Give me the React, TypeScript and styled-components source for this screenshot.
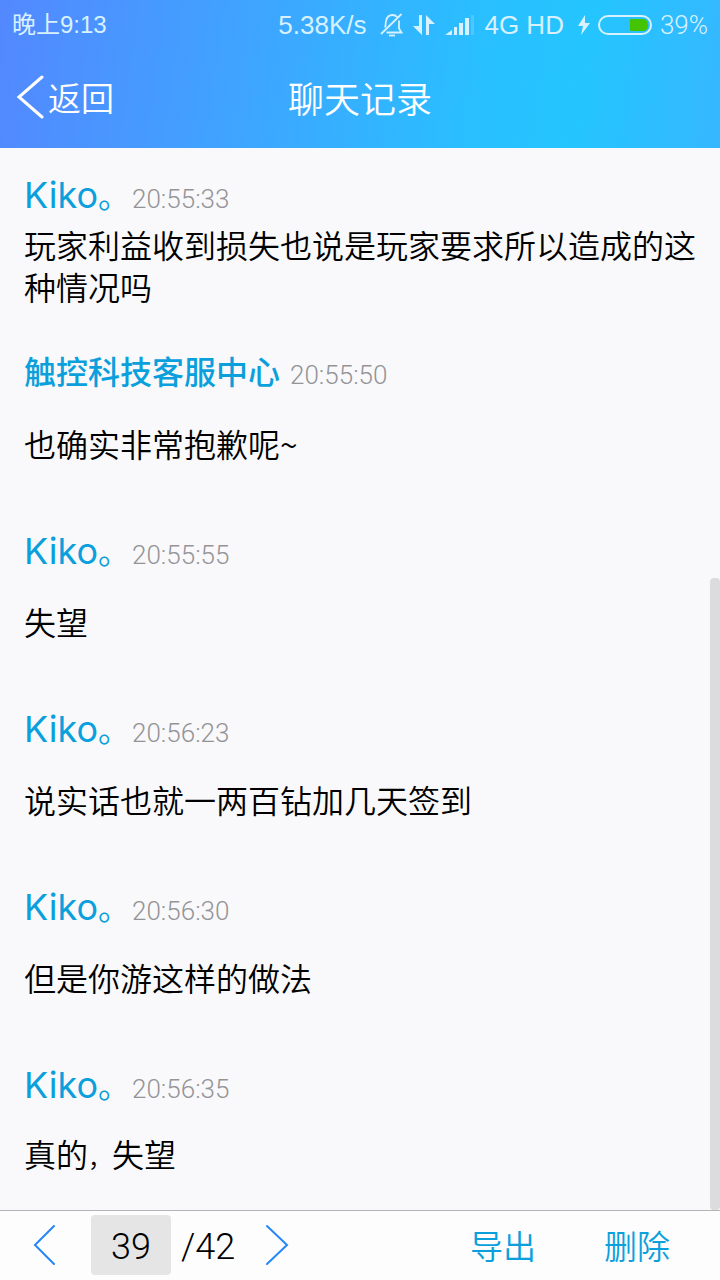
import React from "react";
import styled, { createGlobalStyle } from "styled-components";

const Global = createGlobalStyle`
  * { box-sizing: border-box; }
  body { margin: 0; background: #f9f9fb; font-family: Inter, "Noto Sans CJK SC", sans-serif; color: #000; }
  button, input { font: inherit; color: inherit; border: 0; background: none; padding: 0; margin: 0; }
  svg { display: block; flex: none; }
`;

const Page = styled.div`
  min-height: 100vh;
  display: flex;
  flex-direction: column;
`;

const Header = styled.header`
  height: 148px;
  color: #fff;
  background: linear-gradient(98deg, #5388ff 0%, #3fa4ff 34%, #29bfff 66%, #24c5ff 80%, #36b7ff 100%);
`;

const StatusBar = styled.div`
  height: 48px;
  padding: 2px 12px 0;
  display: flex;
  align-items: center;
  justify-content: space-between;
  font-family: "Liberation Sans", "Noto Sans CJK SC", sans-serif;
  font-size: 24px;
  line-height: 28px;
  color: #d8f1ff;
`;

const StatusItems = styled.div`
  display: flex;
  align-items: center;
  gap: 14px;
  font-size: 26px;
`;

const StatusGroup = styled.div<{ $gap: number }>`
  display: flex;
  align-items: center;
  gap: ${(p) => p.$gap}px;
`;

const StatusText = styled.span<{ $light?: boolean }>`
  white-space: nowrap;
  ${(p) => p.$light && `font-family: Roboto, "Noto Sans CJK SC", sans-serif; font-weight: 300;`}
`;

const NavBar = styled.nav`
  height: 100px;
  padding: 0 16px 2px;
  display: grid;
  grid-template-columns: 1fr auto 1fr;
  align-items: center;
`;

const BackButton = styled.button`
  justify-self: start;
  display: flex;
  align-items: center;
  gap: 4px;
  font-family: "Noto Sans CJK SC", sans-serif;
  font-weight: 350;
  font-size: 33px;
  line-height: 48px;
`;

const Title = styled.h1`
  margin: 0;
  font-family: "Noto Sans CJK SC", sans-serif;
  font-weight: 350;
  font-size: 36px;
  line-height: 48px;
`;

const Chat = styled.main`
  position: relative;
  flex: 1;
  padding: 24px 24px 10px;
  display: flex;
  flex-direction: column;
  gap: 40px;
`;

const ScrollThumb = styled.div`
  position: absolute;
  right: 0;
  bottom: 0;
  width: 10px;
  height: 59.5%;
  border-radius: 4px;
  background: #dcdcdc;
`;

const MessageHead = styled.header`
  height: 48px;
  display: flex;
  align-items: baseline;
  gap: 10px;
  line-height: 46px;
`;

const Name = styled.span<{ $latin?: boolean }>`
  font-family: Inter, "Noto Sans CJK SC", sans-serif;
  font-size: ${(p) => (p.$latin ? 36 : 32)}px;
  font-weight: ${(p) => (p.$latin ? 400 : 500)};
  color: #0ba0dc;
`;

const Punctuation = styled.span<{ $size: number }>`
  display: inline-block;
  width: 24px;
  font-size: ${(p) => p.$size}px;
  white-space: nowrap;
`;

const Time = styled.time`
  font-family: Roboto, sans-serif;
  font-weight: 300;
  font-size: 26px;
  color: #949497;
`;

const MessageBody = styled.div`
  min-height: 90px;
  display: flex;
  align-items: center;
  font-family: "Noto Sans CJK SC", sans-serif;
  font-weight: 350;
  font-size: 32px;
  line-height: 42px;
`;

const Text = styled.p`
  margin: 0;
`;

const Footer = styled.footer`
  height: 70px;
  padding: 0 50px 2px 32px;
  display: flex;
  align-items: center;
  justify-content: space-between;
  border-top: 1px solid #b4b4b8;
  background: #fdfdfd;
`;

const Pager = styled.div`
  display: flex;
  align-items: center;
  font-family: Roboto, sans-serif;
  font-weight: 350;
  font-size: 36px;
`;

const PageInput = styled.input`
  width: 80px;
  height: 60px;
  margin: 0 10px 0 35px;
  padding-top: 4px;
  border-radius: 4px;
  background: #e5e5e5;
  text-align: center;
`;

const PageTotal = styled.span`
  margin-right: 30px;
  padding-top: 4px;
`;

const Actions = styled.div`
  display: flex;
  gap: 68px;
`;

const ActionButton = styled.button`
  font-family: "Noto Sans CJK SC", sans-serif;
  font-weight: 350;
  font-size: 33px;
  line-height: 48px;
  color: #0ba0dc;
`;

type Message = { latin?: boolean; time: string; text: React.ReactNode };

const messages: Message[] = [
  { latin: true, time: "20:55:33", text: "玩家利益收到损失也说是玩家要求所以造成的这种情况吗" },
  { time: "20:55:50", text: "也确实非常抱歉呢~" },
  { latin: true, time: "20:55:55", text: "失望" },
  { latin: true, time: "20:56:23", text: "说实话也就一两百钻加几天签到" },
  { latin: true, time: "20:56:30", text: "但是你游这样的做法" },
  { latin: true, time: "20:56:35", text: <>真的<Punctuation $size={24}>，</Punctuation>失望</> },
];

const MutedBell = () => (
  <svg width="23" height="26" viewBox="0 0 23 26" fill="none" stroke="currentColor" strokeWidth="1.800">
    <path d="M5 15.500C6 13 5.500 11 6 9c.800-4 3-6 6.500-6 2 0 3.500.700 4.500 2M19 8.500v8l2.500 4H6.500M1 22L21.500 2" />
    <path d="M9 23.500h6" />
  </svg>
);

const DataArrows = () => (
  <svg width="22" height="22" viewBox="0 0 22 22" fill="currentColor">
    <path d="M6 1h3v20L0 12h6zM13 21h3V10h6L13 1z" />
  </svg>
);

const Signal = () => (
  <svg width="29" height="22" viewBox="0 0 29 22" fill="currentColor">
    <path d="M0 21L7 16v5zM9 13h3v8H9zM14 9h4v12h-4zM20 4h4v17h-4z" />
    <path d="M26 1h3v20h-3z" opacity=".2" />
  </svg>
);

const Bolt = () => (
  <svg width="12" height="20" viewBox="0 0 12 20" fill="currentColor">
    <path d="M7 0L0 11h5L3 20 12 8H7z" />
  </svg>
);

const Battery = () => (
  <svg width="54" height="20" viewBox="0 0 54 20">
    <rect x="1" y="1" width="52" height="18" rx="9" fill="none" stroke="currentColor" strokeWidth="2" />
    <path d="M33 4h13q4 1 4 6t-4 6H33q-1 0-1-1V5q0-1 1-1z" fill="#44c300" />
  </svg>
);

type ChevronProps = { right?: boolean; width?: number; height?: number; stroke?: number };

const Chevron = ({ right, width = 24, height = 42, stroke = 2 }: ChevronProps) => (
  <svg width={width} height={height} viewBox={`0 0 ${width} ${height}`} fill="none" stroke="currentColor" strokeWidth={stroke} strokeLinecap="round">
    <path
      d={
        right
          ? `M2 2L${width - 2} ${height / 2}L2 ${height - 2}`
          : `M${width - 2} 2L3 ${height / 2}L${width - 2} ${height - 2}`
      }
    />
  </svg>
);

const PageButton = styled.button`
  color: #2587f5;
`;

export default function App() {
  return (
    <Page>
      <Global />
      <Header>
        <StatusBar>
          <StatusText>晚上9:13</StatusText>
          <StatusItems>
            <StatusText>5.38K/s</StatusText>
            <StatusGroup $gap={10}>
              <MutedBell />
              <DataArrows />
              <Signal />
              <StatusText>4G HD</StatusText>
            </StatusGroup>
            <StatusGroup $gap={8}>
              <Bolt />
              <Battery />
              <StatusText $light>39%</StatusText>
            </StatusGroup>
          </StatusItems>
        </StatusBar>
        <NavBar>
          <BackButton>
            <Chevron width={28} height={44} stroke={3} />
            返回
          </BackButton>
          <Title>聊天记录</Title>
        </NavBar>
      </Header>
      <Chat>
        {messages.map((m) => (
          <article key={m.time}>
            <MessageHead>
              <Name $latin={m.latin}>
                {m.latin ? <>Kiko<Punctuation $size={32}>。</Punctuation></> : "触控科技客服中心"}
              </Name>
              <Time>{m.time}</Time>
            </MessageHead>
            <MessageBody>
              <Text>{m.text}</Text>
            </MessageBody>
          </article>
        ))}
        <ScrollThumb />
      </Chat>
      <Footer>
        <Pager>
          <PageButton aria-label="上一页"><Chevron /></PageButton>
          <PageInput aria-label="页码" defaultValue="39" />
          <PageTotal>/42</PageTotal>
          <PageButton aria-label="下一页"><Chevron right /></PageButton>
        </Pager>
        <Actions>
          <ActionButton>导出</ActionButton>
          <ActionButton>删除</ActionButton>
        </Actions>
      </Footer>
    </Page>
  );
}
